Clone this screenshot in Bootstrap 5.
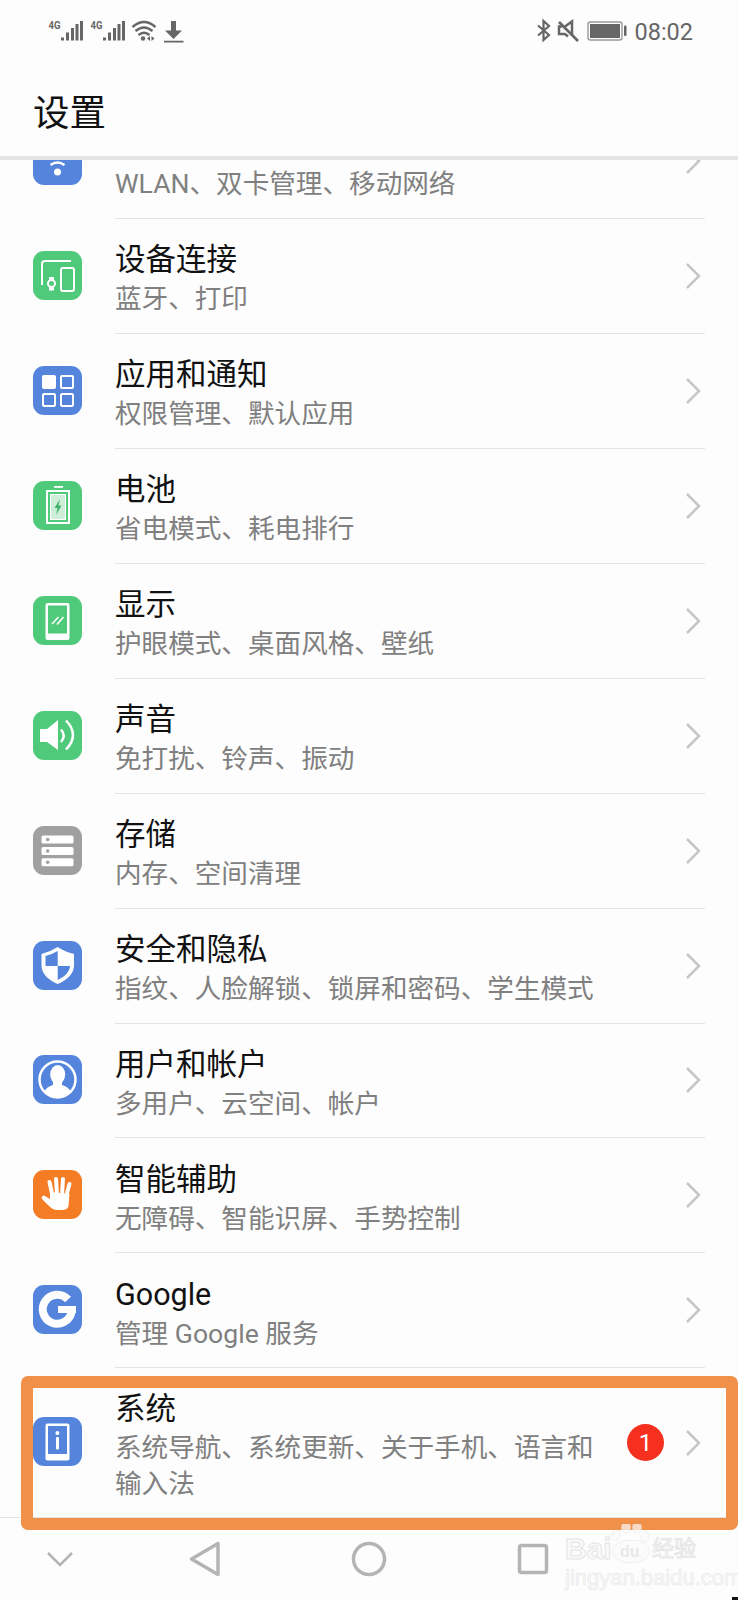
<!DOCTYPE html>
<html lang="zh-CN">
<head>
  <meta charset="UTF-8">
  <title>设置</title>
  <meta name="viewport" content="width=device-width, initial-scale=1">
  <link href="https://cdn.jsdelivr.net/npm/bootstrap@5.3.3/dist/css/bootstrap.min.css" rel="stylesheet">
  <style>
    body { background: #fdfdfd; font-family: Roboto, "Noto Sans CJK SC", sans-serif; }
    .phone { width: 738px; height: 1600px; background: #fdfdfd; }
    .top-head { height: 160px; border-bottom: 4px solid #e5e5e5; }
    .stat-line { padding: 14px 45px 0 40px; }
    .stat-time { font-size: 23.5px; line-height: 36px; color: #666; margin-left: 6px; }
    .page-name { font-size: 36.5px; line-height: 50px; margin: 39px 0 0 33px; color: #111; }
    .scroll-area { height: 1357px; }
    .set-list { margin-top: -56px; }
    .set-row { height: 114.95px; }
    .set-row.tall { height: 149px; }
    .set-ico { width: 49px; height: 49px; margin: -2px 33px 0 33px; }
    .set-body { border-bottom: 1px solid #e3e3e3; margin-right: 33px; }
    .tall .set-body { border-bottom: 0; }
    .set-text { padding-top: 5px; }
    .set-title { font-size: 30.5px; line-height: 42px; color: #111; }
    .set-sub { font-size: 26.6px; line-height: 36px; color: #808080; }
    .tall .set-sub { padding-right: 24px; }
    .set-chev { width: 16px; height: 28px; margin: 0 4px 0 14px; }
    .set-count { width: 37px; height: 37px; background: #f5301f; color: #fff; font-size: 24px; margin-right: 7px; }
    .nav-keys { height: 83px; border-top: 1px solid #e3e3e3; padding-left: 46px; }
    .nav-keys svg + svg { margin-left: 115px; }
    .nav-keys svg.far-key { margin-left: 130px; }
    .mark-box { left: 21px; top: 1376px; width: 717px; height: 154px; border: 12px solid #f19149; border-radius: 7px; pointer-events: none; }
    .wm-wrap { left: 565px; top: 1524px; width: 140px; height: 62px; }
    .wm-text { left: 0; font-family: "Liberation Sans", "Noto Sans CJK SC", sans-serif; color: #f9f9f9; -webkit-text-stroke: 1px #e6e6e6; white-space: nowrap; }
    .wm-bai { top: 10px; font-size: 30px; line-height: 30px; font-weight: 700; }
    .wm-jy { left: 87px; top: 12px; font-size: 22px; line-height: 26px; }
    .wm-url { top: 42px; font-size: 22px; line-height: 24px; -webkit-text-stroke: .6px #e8e8e8; }
    .wm-du { left: 55px; top: 19px; font-size: 16px; line-height: 18px; font-weight: 700; -webkit-text-stroke: 0; color: #e8e8e8; }
    .corner-bit { right: 0; bottom: 0; width: 6px; height: 3px; background: #111; }
  </style>
</head>
<body class="m-0">
<div class="phone position-relative overflow-hidden d-flex flex-column">

  <!-- status bar + title -->
  <header class="top-head flex-shrink-0">
    <div class="stat-line d-flex justify-content-between">
      <svg width="150" height="36" viewBox="0 0 150 36">
        <g fill="#666">
          <text x="8.500" y="15" font-family="Roboto" font-size="11.500" font-weight="700" textLength="12" lengthAdjust="spacingAndGlyphs">4G</text>
          <rect x="21" y="23.500" width="3" height="3"/><rect x="26" y="18.500" width="3" height="8"/><rect x="31" y="14" width="3" height="12.500"/><rect x="35.500" y="10" width="3" height="16.500"/><rect x="40" y="7" width="3" height="19.500"/>
          <text x="50.500" y="15" font-family="Roboto" font-size="11.500" font-weight="700" textLength="12" lengthAdjust="spacingAndGlyphs">4G</text>
          <rect x="63" y="23.500" width="3" height="3"/><rect x="68" y="18.500" width="3" height="8"/><rect x="73" y="14" width="3" height="12.500"/><rect x="77.500" y="10" width="3" height="16.500"/><rect x="82" y="7" width="3" height="19.500"/>
          <circle cx="103" cy="24.500" r="2.200"/>
          <path d="M110 22l-3 2.500 3 2.500zM111.500 22l3 2.500-3 2.500z"/>
          <path d="M131 7h5v9.500h6l-8.500 8.500-8.500-8.500h6zM124 26.800h19.500v1.800H124z"/>
        </g>
        <g fill="none" stroke="#666" stroke-width="2.400">
          <path d="M92.500 13Q104 3 115.500 13M95.500 17Q104 10 112.500 17M98.500 21Q104 16.500 109.500 21"/>
        </g>
      </svg>
      <div class="d-flex">
        <svg width="100" height="36" viewBox="0 0 100 36">
          <path d="M10 11.500L21 21l-5.500 5V7L21 12 10 21.500" fill="none" stroke="#666" stroke-width="2.200"/>
          <path d="M37 12.500l7-5v14M40 22.500l-3-2.500h-6v-7.500h3" fill="none" stroke="#666" stroke-width="2.500"/>
          <path d="M31 8l19 19" stroke="#666" stroke-width="2.600"/>
          <rect x="60" y="8" width="34" height="18" rx="2.500" fill="#fdfdfd" stroke="#999" stroke-width="1.400"/>
          <rect x="62" y="10" width="30" height="14" fill="#666"/>
          <rect x="96" y="11.500" width="2.500" height="10.500" rx="1" fill="#666"/>
        </svg>
        <span class="stat-time">08:02</span>
      </div>
    </div>
    <div class="page-name">设置</div>
  </header>

  <!-- settings list -->
  <div class="scroll-area overflow-hidden flex-shrink-0">
    <div class="set-list list-group list-group-flush">

      <div class="set-row list-group-item d-flex align-items-center p-0 border-0 bg-transparent">
        <svg class="set-ico flex-shrink-0" viewBox="0 0 49 49"><rect width="49" height="49" rx="11" fill="#5484dc"/><path d="M17.500 29Q24.500 24 31.500 29" fill="none" stroke="#fff" stroke-width="2.500"/><circle cx="24.500" cy="36" r="3.500" fill="#fff"/></svg>
        <div class="set-body d-flex align-items-center flex-grow-1 h-100">
          <div class="set-text flex-grow-1"><div class="set-title">&nbsp;</div><div class="set-sub">WLAN、双卡管理、移动网络</div></div>
          <svg class="set-chev flex-shrink-0" viewBox="0 0 16 28"><path d="M2 2l12 12L2 26" fill="none" stroke="#c6c6c6" stroke-width="2.500"/></svg>
        </div>
      </div>

      <div class="set-row list-group-item d-flex align-items-center p-0 border-0 bg-transparent">
        <svg class="set-ico flex-shrink-0" viewBox="0 0 49 49"><rect width="49" height="49" rx="11" fill="#4fc97a"/><g fill="none" stroke="#fff" stroke-width="2"><path d="M9 34V13q0-3 3-3h26"/><rect x="28" y="17" width="13" height="23" rx="2"/><circle cx="18.500" cy="32.500" r="3.500"/></g><path d="M16 26h5v3.500h-5zM16 35.500h5v4h-5z" fill="#fff"/></svg>
        <div class="set-body d-flex align-items-center flex-grow-1 h-100">
          <div class="set-text flex-grow-1"><div class="set-title">设备连接</div><div class="set-sub">蓝牙、打印</div></div>
          <svg class="set-chev flex-shrink-0" viewBox="0 0 16 28"><path d="M2 2l12 12L2 26" fill="none" stroke="#c6c6c6" stroke-width="2.500"/></svg>
        </div>
      </div>

      <div class="set-row list-group-item d-flex align-items-center p-0 border-0 bg-transparent">
        <svg class="set-ico flex-shrink-0" viewBox="0 0 49 49"><rect width="49" height="49" rx="11" fill="#5484dc"/><rect x="9" y="9" width="14" height="14" rx="2" fill="#fff"/><g fill="none" stroke="#fff" stroke-width="2"><rect x="28" y="10" width="12" height="12" rx="1"/><rect x="10" y="28" width="12" height="12" rx="1"/><rect x="28" y="28" width="12" height="12" rx="1"/></g></svg>
        <div class="set-body d-flex align-items-center flex-grow-1 h-100">
          <div class="set-text flex-grow-1"><div class="set-title">应用和通知</div><div class="set-sub">权限管理、默认应用</div></div>
          <svg class="set-chev flex-shrink-0" viewBox="0 0 16 28"><path d="M2 2l12 12L2 26" fill="none" stroke="#c6c6c6" stroke-width="2.500"/></svg>
        </div>
      </div>

      <div class="set-row list-group-item d-flex align-items-center p-0 border-0 bg-transparent">
        <svg class="set-ico flex-shrink-0" viewBox="0 0 49 49"><rect width="49" height="49" rx="11" fill="#4fc97a"/><rect x="21" y="5" width="9" height="1.800" fill="#fff"/><rect x="14" y="10" width="22" height="32" fill="none" stroke="#fff" stroke-width="2"/><rect x="17.500" y="13.500" width="15" height="25" fill="#cfeeda" stroke="#fff"/><path d="M27 18l-5.500 9h3l-1.500 7 5.500-9.500h-3z" fill="#3fb56a"/></svg>
        <div class="set-body d-flex align-items-center flex-grow-1 h-100">
          <div class="set-text flex-grow-1"><div class="set-title">电池</div><div class="set-sub">省电模式、耗电排行</div></div>
          <svg class="set-chev flex-shrink-0" viewBox="0 0 16 28"><path d="M2 2l12 12L2 26" fill="none" stroke="#c6c6c6" stroke-width="2.500"/></svg>
        </div>
      </div>

      <div class="set-row list-group-item d-flex align-items-center p-0 border-0 bg-transparent">
        <svg class="set-ico flex-shrink-0" viewBox="0 0 49 49"><rect width="49" height="49" rx="11" fill="#4fc97a"/><rect x="12.500" y="7" width="24" height="37" rx="2" fill="#fff"/><rect x="15" y="9.500" width="19" height="28" fill="#4fc97a"/><path d="M19 28l6.500-7M24 28.500l6.500-7.500" stroke="#fff" stroke-width="1.600"/></svg>
        <div class="set-body d-flex align-items-center flex-grow-1 h-100">
          <div class="set-text flex-grow-1"><div class="set-title">显示</div><div class="set-sub">护眼模式、桌面风格、壁纸</div></div>
          <svg class="set-chev flex-shrink-0" viewBox="0 0 16 28"><path d="M2 2l12 12L2 26" fill="none" stroke="#c6c6c6" stroke-width="2.500"/></svg>
        </div>
      </div>

      <div class="set-row list-group-item d-flex align-items-center p-0 border-0 bg-transparent">
        <svg class="set-ico flex-shrink-0" viewBox="0 0 49 49"><rect width="49" height="49" rx="11" fill="#4fc97a"/><path d="M7 18h7L25 9v30L14 31H7z" fill="#fff"/><g fill="none" stroke="#fff" stroke-width="2.500"><path d="M28 18.500Q33.500 25 28 31"/><path d="M33 9.500Q47 24 33 38.500"/></g></svg>
        <div class="set-body d-flex align-items-center flex-grow-1 h-100">
          <div class="set-text flex-grow-1"><div class="set-title">声音</div><div class="set-sub">免打扰、铃声、振动</div></div>
          <svg class="set-chev flex-shrink-0" viewBox="0 0 16 28"><path d="M2 2l12 12L2 26" fill="none" stroke="#c6c6c6" stroke-width="2.500"/></svg>
        </div>
      </div>

      <div class="set-row list-group-item d-flex align-items-center p-0 border-0 bg-transparent">
        <svg class="set-ico flex-shrink-0" viewBox="0 0 49 49"><rect width="49" height="49" rx="11" fill="#a0a0a0"/><g fill="#fff"><rect x="8.500" y="9.500" width="32" height="8" rx="1.500"/><rect x="8.500" y="21" width="32" height="8" rx="1.500"/><rect x="8.500" y="32.300" width="32" height="8" rx="1.500"/></g><g fill="#a0a0a0"><circle cx="14.700" cy="13.500" r="1.800"/><circle cx="14.700" cy="25" r="1.800"/><circle cx="14.700" cy="36.300" r="1.800"/></g></svg>
        <div class="set-body d-flex align-items-center flex-grow-1 h-100">
          <div class="set-text flex-grow-1"><div class="set-title">存储</div><div class="set-sub">内存、空间清理</div></div>
          <svg class="set-chev flex-shrink-0" viewBox="0 0 16 28"><path d="M2 2l12 12L2 26" fill="none" stroke="#c6c6c6" stroke-width="2.500"/></svg>
        </div>
      </div>

      <div class="set-row list-group-item d-flex align-items-center p-0 border-0 bg-transparent">
        <svg class="set-ico flex-shrink-0" viewBox="0 0 49 49"><rect width="49" height="49" rx="11" fill="#5484dc"/><path d="M24.700 6Q32 11 41 13V24Q41 36 24.700 43 8.500 36 8.500 24V13Q17 11 24.700 6Z" fill="#fff"/><path d="M24.700 10Q18 14 12.500 15V25H24.700ZM24.700 25H37.200Q36 34 24.700 39Z" fill="#5484dc"/></svg>
        <div class="set-body d-flex align-items-center flex-grow-1 h-100">
          <div class="set-text flex-grow-1"><div class="set-title">安全和隐私</div><div class="set-sub">指纹、人脸解锁、锁屏和密码、学生模式</div></div>
          <svg class="set-chev flex-shrink-0" viewBox="0 0 16 28"><path d="M2 2l12 12L2 26" fill="none" stroke="#c6c6c6" stroke-width="2.500"/></svg>
        </div>
      </div>

      <div class="set-row list-group-item d-flex align-items-center p-0 border-0 bg-transparent">
        <svg class="set-ico flex-shrink-0" viewBox="0 0 49 49"><rect width="49" height="49" rx="11" fill="#5484dc"/><circle cx="24.500" cy="24.500" r="18" fill="none" stroke="#fff" stroke-width="2.500"/><ellipse cx="24.700" cy="19.500" rx="7.500" ry="9.500" fill="#fff"/><path d="M11.500 36.500Q13 32 20 30V26H29V30Q36 32 37.500 36.500 32 42 24.500 42 17 42 11.500 36.500Z" fill="#fff"/></svg>
        <div class="set-body d-flex align-items-center flex-grow-1 h-100">
          <div class="set-text flex-grow-1"><div class="set-title">用户和帐户</div><div class="set-sub">多用户、云空间、帐户</div></div>
          <svg class="set-chev flex-shrink-0" viewBox="0 0 16 28"><path d="M2 2l12 12L2 26" fill="none" stroke="#c6c6c6" stroke-width="2.500"/></svg>
        </div>
      </div>

      <div class="set-row list-group-item d-flex align-items-center p-0 border-0 bg-transparent">
        <svg class="set-ico flex-shrink-0" viewBox="0 0 49 49"><rect width="49" height="49" rx="11" fill="#f47c25"/><g stroke="#fff" stroke-width="4" stroke-linecap="round"><path d="M19.500 26L16.500 12M24 25L23 9M29 25L30 9M33 27L36.500 14"/></g><path d="M17 22L36.500 24 35.500 36Q34.500 40 29 40H24Q20 40 16 36L9 29Q8 26 11 25.500L17 29Z" fill="#fff"/></svg>
        <div class="set-body d-flex align-items-center flex-grow-1 h-100">
          <div class="set-text flex-grow-1"><div class="set-title">智能辅助</div><div class="set-sub">无障碍、智能识屏、手势控制</div></div>
          <svg class="set-chev flex-shrink-0" viewBox="0 0 16 28"><path d="M2 2l12 12L2 26" fill="none" stroke="#c6c6c6" stroke-width="2.500"/></svg>
        </div>
      </div>

      <div class="set-row list-group-item d-flex align-items-center p-0 border-0 bg-transparent">
        <svg class="set-ico flex-shrink-0" viewBox="0 0 49 49"><rect width="49" height="49" rx="11" fill="#5484dc"/><path d="M35 14.500A14.500 14.500 0 1 0 38.500 27" fill="none" stroke="#fff" stroke-width="8"/><rect x="25" y="21" width="18" height="7" fill="#fff"/></svg>
        <div class="set-body d-flex align-items-center flex-grow-1 h-100">
          <div class="set-text flex-grow-1"><div class="set-title">Google</div><div class="set-sub">管理 Google 服务</div></div>
          <svg class="set-chev flex-shrink-0" viewBox="0 0 16 28"><path d="M2 2l12 12L2 26" fill="none" stroke="#c6c6c6" stroke-width="2.500"/></svg>
        </div>
      </div>

      <div class="set-row tall list-group-item d-flex align-items-center p-0 border-0 bg-transparent">
        <svg class="set-ico flex-shrink-0" viewBox="0 0 49 49"><rect width="49" height="49" rx="11" fill="#5484dc"/><rect x="12.500" y="6.500" width="24" height="37" rx="2" fill="#fff"/><rect x="15" y="9" width="19" height="28" fill="#5484dc"/><circle cx="24.400" cy="16" r="2" fill="#fff"/><rect x="23" y="20" width="3" height="12.500" rx="1" fill="#fff"/></svg>
        <div class="set-body d-flex align-items-center flex-grow-1 h-100">
          <div class="set-text flex-grow-1"><div class="set-title">系统</div><div class="set-sub">系统导航、系统更新、关于手机、语言和输入法</div></div>
          <span class="set-count rounded-circle d-flex align-items-center justify-content-center flex-shrink-0">1</span>
          <svg class="set-chev flex-shrink-0" viewBox="0 0 16 28"><path d="M2 2l12 12L2 26" fill="none" stroke="#c6c6c6" stroke-width="2.500"/></svg>
        </div>
      </div>
    </div>
  </div>

  <!-- nav keys -->
  <nav class="nav-keys d-flex align-items-center flex-shrink-0">
    <svg width="28" height="16" viewBox="0 0 28 16"><path d="M2 2l12 12L26 2" fill="none" stroke="#b4b4b4" stroke-width="2.500"/></svg>
    <svg width="32" height="36" viewBox="0 0 32 36"><path d="M2.500 18L29 2.500v31z" fill="none" stroke="#b4b4b4" stroke-width="3.500" stroke-linejoin="round"/></svg>
    <svg class="far-key" width="36" height="36" viewBox="0 0 36 36"><circle cx="18" cy="18" r="15.500" fill="none" stroke="#b4b4b4" stroke-width="3.500"/></svg>
    <svg class="far-key" width="32" height="32" viewBox="0 0 32 32"><rect x="2.500" y="2.500" width="27" height="27" rx="2" fill="none" stroke="#b4b4b4" stroke-width="3.500"/></svg>
  </nav>

  <!-- annotation drawn over the screenshot -->
  <div class="mark-box position-absolute"></div>

  <!-- watermark -->
  <div class="wm-wrap position-absolute">
    <svg class="position-absolute top-0 start-0" width="140" height="44" viewBox="0 0 140 44">
      <g fill="#fafafa" fill-opacity=".7" stroke="#e4e4e4" stroke-opacity=".5">
        <ellipse cx="61" cy="3.500" rx="4.500" ry="5.500"/><ellipse cx="72" cy="3.500" rx="4.500" ry="5.500"/>
        <ellipse cx="51" cy="11" rx="4" ry="5"/><ellipse cx="80" cy="13" rx="4" ry="5"/>
        <ellipse cx="66" cy="27.500" rx="19" ry="11.500"/>
      </g>
    </svg>
    <span class="wm-text wm-bai position-absolute">Bai</span>
    <span class="wm-text wm-du position-absolute">du</span>
    <span class="wm-text wm-jy position-absolute">经验</span>
    <span class="wm-text wm-url position-absolute">jingyan.baidu.com</span>
  </div>
  <div class="corner-bit position-absolute"></div>
</div>
<script src="https://cdn.jsdelivr.net/npm/bootstrap@5.3.3/dist/js/bootstrap.bundle.min.js"></script>
</body>
</html>
